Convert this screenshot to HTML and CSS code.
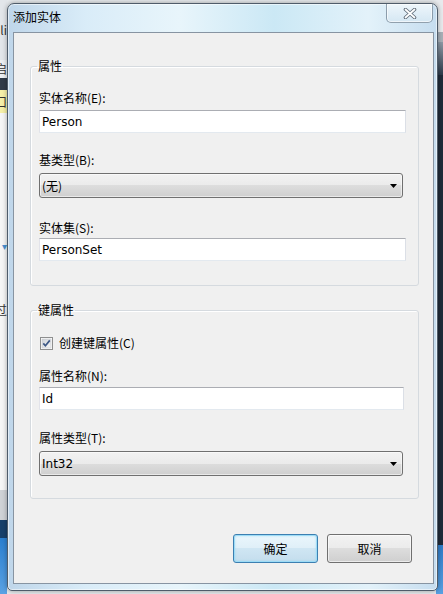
FILE: index.html
```html
<!DOCTYPE html>
<html lang="zh">
<head>
    <meta charset="UTF-8">
    <title>添加实体</title>
    <link rel="stylesheet" href="styles.css">
</head>
<body>

<div class="desktop">
    <div class="strip strip-left">
        <div class="seg seg-top"><span class="frag">li</span></div>
        <div class="seg seg-light"><span class="frag">启</span></div>
        <div class="seg seg-dark"></div>
        <div class="seg seg-yellow"><span class="frag">口</span></div>
        <div class="seg seg-white">
            <span class="frag frag-mark">▾</span>
            <span class="frag frag-low">过</span>
        </div>
        <div class="seg seg-gray"></div>
        <div class="seg seg-navy"></div>
        <div class="seg seg-blue"></div>
    </div>

    <div class="strip strip-right">
        <div class="seg rseg-top"></div>
        <div class="seg rseg-mid"></div>
        <div class="seg rseg-fade"></div>
        <div class="seg rseg-dark"></div>
        <div class="seg rseg-blue"></div>
    </div>

    <!-- 对话框 -->
    <div class="dialog">
        <div class="titlebar">
            <span class="title">添加实体</span>
            <div class="close-btn">
                <svg width="14" height="11" viewBox="0 0 14 11">
                    <path d="M2.5 1.5 L11.5 9.5 M11.5 1.5 L2.5 9.5" stroke="#5f6b78" stroke-width="3.6" stroke-linecap="round" fill="none"/>
                    <path d="M2.5 1.5 L11.5 9.5 M11.5 1.5 L2.5 9.5" stroke="#ffffff" stroke-width="1.8" stroke-linecap="round" fill="none"/>
                </svg>
            </div>
        </div>

        <div class="client">
            <fieldset class="group group-props">
                <legend>属性</legend>
                <label class="lbl">实体名称(E):</label>
                <input class="textbox tb-first" type="text" value="Person">
                <label class="lbl lbl-second">基类型(B):</label>
                <div class="combo combo-first">
                    <span>(无)</span>
                    <svg width="7" height="4" viewBox="0 0 7 4"><polygon points="0,0 7,0 3.5,4" fill="#000"/></svg>
                </div>
                <label class="lbl lbl-third">实体集(S):</label>
                <input class="textbox tb-last" type="text" value="PersonSet">
            </fieldset>

            <fieldset class="group group-key">
                <legend>键属性</legend>
                <div class="check-row">
                    <svg class="checkbox" width="13" height="13" viewBox="0 0 13 13">
                        <defs>
                            <linearGradient id="cbFill" x1="0" y1="0" x2="1" y2="1">
                                <stop offset="0" stop-color="#cfd3d8"/>
                                <stop offset="1" stop-color="#f7f7f7"/>
                            </linearGradient>
                        </defs>
                        <rect x="0.5" y="0.5" width="12" height="12" fill="#fff" stroke="#8e8f8f"/>
                        <rect x="2" y="2" width="9" height="9" fill="url(#cbFill)" stroke="#c3c6cb" stroke-width="0.6"/>
                        <path d="M3.3 6.4 L5.4 8.8 L9.8 3.4" stroke="#3d5886" stroke-width="1.7" fill="none"/>
                    </svg>
                    <span>创建键属性(C)</span>
                </div>
                <label class="lbl lbl-keyname">属性名称(N):</label>
                <input class="textbox tb-key" type="text" value="Id">
                <label class="lbl lbl-keytype">属性类型(T):</label>
                <div class="combo combo-key">
                    <span>Int32</span>
                    <svg width="7" height="4" viewBox="0 0 7 4"><polygon points="0,0 7,0 3.5,4" fill="#000"/></svg>
                </div>
            </fieldset>

            <div class="buttons">
                <button class="btn btn-default">确定</button>
                <button class="btn">取消</button>
            </div>
        </div>
    </div>
</div>

</body>
</html>
```

FILE: styles.css
```css
body {
    margin: 0;
    overflow: hidden;
    font-family: "Noto Sans CJK SC", sans-serif;
    font-size: 12px;
}

.desktop {
    position: relative;
    width: 443px;
    height: 594px;
    background: #e6e9ec;
    display: flex;
    justify-content: space-between;
}

/* 背后桌面的边角 */
.strip {
    width: 7px;
    display: flex;
    flex-direction: column;
    overflow: hidden;
}

.seg {
    display: flex;
    justify-content: flex-end;
    font-size: 12px;
    line-height: 14px;
    color: #333;
    white-space: nowrap;
}

.seg-top { height: 60px; background: #e3e6ea; align-items: center; }
.seg-light { height: 18px; background: #eef0f2; align-items: center; }
.seg-dark { height: 12px; background: #313b48; }
.seg-yellow { height: 23px; background: #f6f0a8; align-items: center; }
.seg-white {
    height: 377px;
    background: #f6f6f6;
    flex-direction: column;
    justify-content: flex-start;
    align-items: flex-end;
}
.seg-gray { height: 30px; background: #cfd2d6; }
.seg-navy { height: 18px; background: #17406b; }
.seg-blue { flex: 1; background: linear-gradient(#2a7fd0, #5aa2e4); }

.frag-mark { margin-top: 126px; color: #4a90d0; font-size: 10px; }
.frag-low { margin-top: 50px; }

.rseg-top { height: 32px; background: #e8eaed; }
.rseg-mid { height: 10px; background: #a8b0b8; }
.rseg-fade { height: 33px; background: linear-gradient(#8e9aa6, #2c3a4a); }
.rseg-dark { height: 470px; background: #1f2b39; }
.rseg-blue { flex: 1; background: linear-gradient(#2f7cc8, #58a0e2); }

/* 窗口 */
.dialog {
    position: absolute;
    left: 7px;
    top: 3px;
    width: 431px;
    height: 588px;
    box-sizing: border-box;
    border: 1px solid #4f5c6a;
    border-radius: 7px 7px 5px 5px;
    background: linear-gradient(90deg, #bfd6ea 0%, #d9ecf8 18%, #e8f5fb 40%, #cbe8f5 62%, #e3f2fa 84%, #c6ddef 100%);
    box-shadow: inset 0 0 0 1px rgba(255, 255, 255, 0.55), 0 0 5px rgba(0, 0, 0, 0.35);
}

.titlebar {
    height: 28px;
    display: flex;
    justify-content: space-between;
    align-items: flex-start;
    padding-left: 5px;
}

.title {
    margin-top: 5px;
    line-height: 16px;
    color: #000;
}

.close-btn {
    width: 47px;
    height: 19px;
    box-sizing: border-box;
    margin-right: 4px;
    border: 1px solid rgba(70, 90, 110, 0.55);
    border-top: none;
    border-radius: 0 0 5px 5px;
    background: linear-gradient(#eef6fb, #d5e7f3);
    box-shadow: inset 0 0 0 1px rgba(255, 255, 255, 0.6);
    display: flex;
    justify-content: center;
    align-items: center;
}

.client {
    margin: 0 3px 0 5px;
    height: 552px;
    box-sizing: border-box;
    border: 1px solid #8794a2;
    background: #f0f0f0;
    padding-top: 25px;
}

/* 分组框 */
.group {
    margin: 0 0 0 16px;
    width: 389px;
    box-sizing: border-box;
    min-width: 0;
    border: 1px solid #d5dadf;
    border-radius: 3px;
    box-shadow: inset 1px 1px 0 #fff;
    padding: 16px 0 24px 8px;
}

.group legend {
    margin-left: -2px;
    padding: 0 1px;
    line-height: 16px;
    color: #000;
}

.group-key {
    margin-top: 16px;
    padding: 17px 0 22px 8px;
}

.lbl {
    display: block;
    line-height: 16px;
    height: 16px;
    color: #000;
}

.lbl-second { margin-top: 19px; }
.lbl-third { margin-top: 22px; }
.lbl-keyname { margin-top: 17px; }
.lbl-keytype { margin-top: 20px; }

.textbox {
    display: block;
    box-sizing: border-box;
    width: 367px;
    height: 23px;
    margin: 0;
    padding: 0 2px;
    border: 1px solid;
    border-color: #abadb3 #dbdfe6 #e3e9ef #e2e3ea;
    background: #fff;
    font-family: "DejaVu Sans", sans-serif;
    font-size: 12px;
    color: #000;
    outline: none;
}

.tb-first { margin-top: 4px; }
.tb-last { margin-top: 2px; }
.tb-key { margin-top: 3px; width: 365px; }

.combo {
    box-sizing: border-box;
    width: 364px;
    height: 25px;
    margin-top: 5px;
    padding: 0 5px 0 2px;
    border: 1px solid #707070;
    border-radius: 3px;
    background: linear-gradient(#f2f2f2 0%, #ebebeb 50%, #dddddd 50%, #cfcfcf 100%);
    box-shadow: inset 0 0 0 1px rgba(255, 255, 255, 0.55);
    display: flex;
    justify-content: space-between;
    align-items: center;
    font-family: "DejaVu Sans", "Noto Sans CJK SC", sans-serif;
    font-size: 12px;
}

.combo-first span {
    font-family: "Noto Sans CJK SC", sans-serif;
}

.check-row {
    display: flex;
    align-items: center;
    height: 16px;
    line-height: 16px;
    gap: 6px;
    padding-left: 1px;
}

.checkbox {
    display: block;
}

/* 底部按钮 */
.buttons {
    display: flex;
    justify-content: flex-end;
    gap: 9px;
    margin-top: 35px;
    padding-right: 21px;
}

.btn {
    width: 85px;
    height: 29px;
    box-sizing: border-box;
    border: 1px solid #707070;
    border-radius: 3px;
    background: linear-gradient(#f2f2f2 0%, #ebebeb 50%, #dddddd 50%, #cfcfcf 100%);
    box-shadow: inset 0 0 0 1px rgba(255, 255, 255, 0.6);
    font-family: "Noto Sans CJK SC", sans-serif;
    font-size: 12px;
    color: #000;
    padding: 0;
}

.btn-default {
    border-color: #3c7fb1;
    background: linear-gradient(#eaf6fc 0%, #dfeff8 50%, #cfe6f3 50%, #c4dded 100%);
    box-shadow: inset 0 0 0 1px #9ddcf6, inset 0 0 3px #7fcdee;
}
```
